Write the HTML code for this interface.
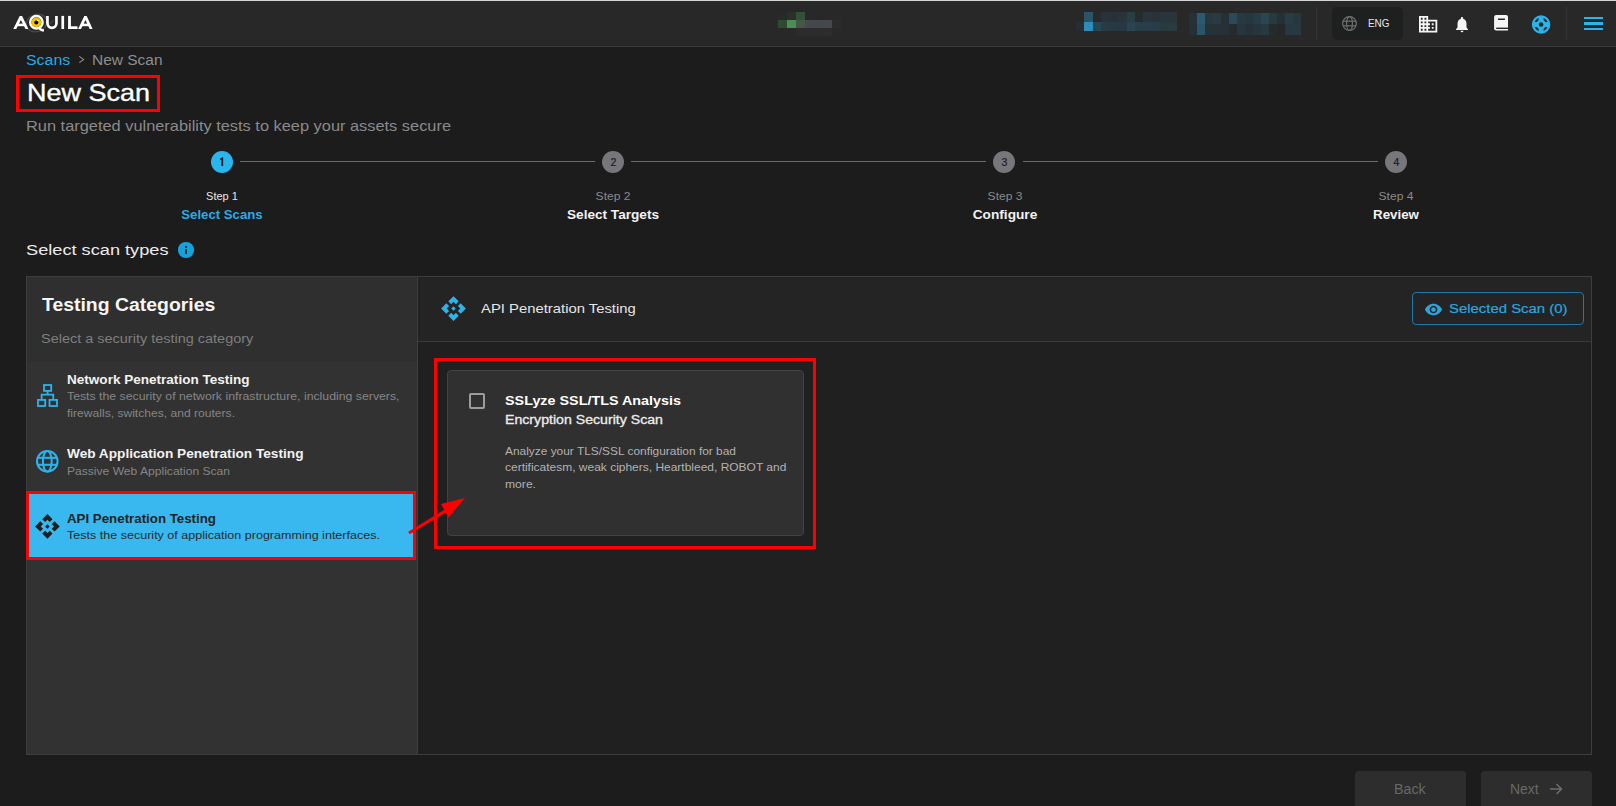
<!DOCTYPE html>
<html><head><meta charset="utf-8"><style>

html,body{margin:0;padding:0;}
body{width:1616px;height:806px;position:relative;overflow:hidden;background:#1c1c1c;font-family:"Liberation Sans",sans-serif;}
.a{position:absolute;box-sizing:border-box;}
.t{position:absolute;white-space:nowrap;line-height:1;display:block;}
svg{position:absolute;overflow:visible;}

</style></head><body>

<div class="a" style="left:0;top:0;width:1616px;height:1px;background:#d6d6d6"></div>
<div class="a" style="left:0;top:1px;width:1616px;height:45px;background:#282828"></div>
<div class="a" style="left:0;top:45px;width:1616px;height:1px;background:#252525"></div>
<div class="a" style="left:0;top:46px;width:1616px;height:1px;background:#3c3c3c"></div>

<svg style="left:0;top:0" width="110" height="46" viewBox="0 0 110 46">
 <ellipse cx="36.5" cy="23" rx="10.5" ry="8.6" fill="none" stroke="#4a4a4a" stroke-width="1.4" transform="rotate(-18 36.5 23)"/>
 <path d="M47 25.5 L54 20.5" stroke="#3c3c3c" stroke-width="1.6"/>
 <g fill="#fff">
  <polygon points="13.3,29 19.7,15.9 22.1,15.9 28.4,29 25.5,29 20.9,20.1 16.2,29"/>
  <rect x="16.6" y="23.6" width="8.6" height="2.6"/>
  <path d="M46.1 15.9 H48.8 V23.3 A3.15 3.15 0 0 0 55.1 23.3 V15.9 H57.8 V23.3 A5.85 5.85 0 0 1 46.1 23.3 Z"/>
  <rect x="61.4" y="15.9" width="2.7" height="13.1"/>
  <rect x="68.1" y="15.9" width="2.8" height="13.1"/>
  <rect x="68.1" y="26.3" width="9.4" height="2.7"/>
  <polygon points="78.1,29 84.3,15.9 86.7,15.9 92.6,29 89.7,29 85.5,20.1 81,29"/>
  <rect x="81.6" y="23.6" width="8.2" height="2.6"/>
 </g>
 <circle cx="36.4" cy="22.2" r="7.4" fill="#282828"/>
 <circle cx="36.4" cy="22.2" r="6.2" fill="none" stroke="#fff" stroke-width="2.5"/>
 <path d="M39.2 27.6 Q41 30.6 44 30.4" fill="none" stroke="#fff" stroke-width="2.3"/>
 <circle cx="36.3" cy="22.4" r="4.9" fill="#f5c400"/>
 <circle cx="36.3" cy="22.4" r="2" fill="#000"/>
 <circle cx="37.7" cy="20.5" r="0.8" fill="#fff"/>
</svg>

<div class="a" style="left:778px;top:12px;width:9px;height:8px;background:#272b27"></div>
<div class="a" style="left:787px;top:12px;width:9px;height:8px;background:#2b302b"></div>
<div class="a" style="left:796px;top:12px;width:9px;height:8px;background:#355038"></div>
<div class="a" style="left:778px;top:20px;width:9px;height:8px;background:#2f4a32"></div>
<div class="a" style="left:787px;top:20px;width:9px;height:8px;background:#4d8c54"></div>
<div class="a" style="left:796px;top:20px;width:9px;height:8px;background:#435846"></div>
<div class="a" style="left:805px;top:20px;width:9px;height:8px;background:#46484c"></div>
<div class="a" style="left:814px;top:20px;width:9px;height:8px;background:#45484b"></div>
<div class="a" style="left:823px;top:20px;width:9px;height:8px;background:#47484c"></div>
<div class="a" style="left:832px;top:20px;width:9px;height:8px;background:#2a2c2a"></div>
<div class="a" style="left:796px;top:28px;width:9px;height:8px;background:#2c2c2c"></div>
<div class="a" style="left:805px;top:28px;width:9px;height:8px;background:#2c2c2c"></div>
<div class="a" style="left:814px;top:28px;width:9px;height:8px;background:#2c2c2c"></div>
<div class="a" style="left:823px;top:28px;width:9px;height:8px;background:#2c2d2e"></div>
<div class="a" style="left:1076px;top:22px;width:8px;height:9px;background:#262e33"></div>
<div class="a" style="left:1084px;top:12px;width:9px;height:10px;background:#2a5468"></div>
<div class="a" style="left:1084px;top:22px;width:9px;height:9px;background:#2c8dbb"></div>
<div class="a" style="left:1093px;top:12px;width:8px;height:10px;background:#262a2d"></div>
<div class="a" style="left:1093px;top:22px;width:8px;height:9px;background:#284651"></div>
<div class="a" style="left:1101px;top:12px;width:9px;height:10px;background:#27323a"></div>
<div class="a" style="left:1101px;top:22px;width:9px;height:9px;background:#283a44"></div>
<div class="a" style="left:1110px;top:12px;width:8px;height:10px;background:#283139"></div>
<div class="a" style="left:1110px;top:22px;width:8px;height:9px;background:#283944"></div>
<div class="a" style="left:1118px;top:12px;width:9px;height:10px;background:#28343a"></div>
<div class="a" style="left:1118px;top:22px;width:9px;height:9px;background:#283842"></div>
<div class="a" style="left:1127px;top:12px;width:8px;height:10px;background:#293d45"></div>
<div class="a" style="left:1127px;top:22px;width:8px;height:9px;background:#294350"></div>
<div class="a" style="left:1135px;top:12px;width:8px;height:10px;background:#252c2e"></div>
<div class="a" style="left:1135px;top:22px;width:8px;height:9px;background:#283f48"></div>
<div class="a" style="left:1143px;top:12px;width:9px;height:10px;background:#28353c"></div>
<div class="a" style="left:1143px;top:22px;width:9px;height:9px;background:#293e4a"></div>
<div class="a" style="left:1152px;top:12px;width:8px;height:10px;background:#27323a"></div>
<div class="a" style="left:1152px;top:22px;width:8px;height:9px;background:#283d49"></div>
<div class="a" style="left:1160px;top:12px;width:9px;height:10px;background:#28363c"></div>
<div class="a" style="left:1160px;top:22px;width:9px;height:9px;background:#283a40"></div>
<div class="a" style="left:1169px;top:12px;width:8px;height:10px;background:#293539"></div>
<div class="a" style="left:1169px;top:22px;width:8px;height:9px;background:#293a40"></div>
<div class="a" style="left:1189px;top:13px;width:8px;height:11px;background:#263037"></div>
<div class="a" style="left:1189px;top:24px;width:8px;height:11px;background:#262f33"></div>
<div class="a" style="left:1197px;top:13px;width:8px;height:11px;background:#2b5a70"></div>
<div class="a" style="left:1197px;top:24px;width:8px;height:11px;background:#2a5468"></div>
<div class="a" style="left:1205px;top:13px;width:8px;height:11px;background:#273840"></div>
<div class="a" style="left:1205px;top:24px;width:8px;height:11px;background:#27313a"></div>
<div class="a" style="left:1213px;top:13px;width:8px;height:11px;background:#283a42"></div>
<div class="a" style="left:1213px;top:24px;width:8px;height:11px;background:#27313a"></div>
<div class="a" style="left:1221px;top:13px;width:8px;height:11px;background:#263137"></div>
<div class="a" style="left:1221px;top:24px;width:8px;height:11px;background:#263036"></div>
<div class="a" style="left:1229px;top:13px;width:8px;height:11px;background:#2a4a5a"></div>
<div class="a" style="left:1229px;top:24px;width:8px;height:11px;background:#262c2e"></div>
<div class="a" style="left:1237px;top:13px;width:8px;height:11px;background:#273a42"></div>
<div class="a" style="left:1237px;top:24px;width:8px;height:11px;background:#27363d"></div>
<div class="a" style="left:1245px;top:13px;width:8px;height:11px;background:#27373f"></div>
<div class="a" style="left:1245px;top:24px;width:8px;height:11px;background:#273139"></div>
<div class="a" style="left:1253px;top:13px;width:8px;height:11px;background:#283c45"></div>
<div class="a" style="left:1253px;top:24px;width:8px;height:11px;background:#27363e"></div>
<div class="a" style="left:1261px;top:13px;width:8px;height:11px;background:#2a4650"></div>
<div class="a" style="left:1261px;top:24px;width:8px;height:11px;background:#283a40"></div>
<div class="a" style="left:1269px;top:13px;width:8px;height:11px;background:#273a40"></div>
<div class="a" style="left:1269px;top:24px;width:8px;height:11px;background:#262a2b"></div>
<div class="a" style="left:1277px;top:13px;width:8px;height:11px;background:#273038"></div>
<div class="a" style="left:1277px;top:24px;width:8px;height:11px;background:#252829"></div>
<div class="a" style="left:1285px;top:13px;width:8px;height:11px;background:#283c46"></div>
<div class="a" style="left:1285px;top:24px;width:8px;height:11px;background:#283840"></div>
<div class="a" style="left:1293px;top:13px;width:8px;height:11px;background:#28373e"></div>
<div class="a" style="left:1293px;top:24px;width:8px;height:11px;background:#273a40"></div>

<div class="a" style="left:1316px;top:7px;width:1px;height:33px;background:#353535"></div>
<div class="a" style="left:1332px;top:7px;width:71px;height:33px;background:#1e1f1f;border-radius:5px"></div>
<svg style="left:1342px;top:15.6px" width="15" height="15" viewBox="0 0 22 22"><g fill="none" stroke="#6e6e6e" stroke-width="1.8">
<circle cx="11" cy="11" r="10.1"/><ellipse cx="11" cy="11" rx="4.3" ry="10.1"/><line x1="1.5" y1="7.6" x2="20.5" y2="7.6"/><line x1="1.5" y1="14.4" x2="20.5" y2="14.4"/></g></svg>

<svg style="left:1418.9px;top:15.6px" width="18.3" height="16.5" viewBox="2 3 20 18" preserveAspectRatio="none"><path fill="#f5f5f5" d="M12 7V3H2v18h20V7H12zM6 19H4v-2h2v2zm0-4H4v-2h2v2zm0-4H4V9h2v2zm0-4H4V5h2v2zm4 12H8v-2h2v2zm0-4H8v-2h2v2zm0-4H8V9h2v2zm0-4H8V5h2v2zm10 12h-8v-2h2v-2h-2v-2h2v-2h-2V9h8v10zm-2-8h-2v2h2v-2zm0 4h-2v2h2v-2z"/></svg>

<svg style="left:1456px;top:17.4px" width="12" height="15.3" viewBox="4 2.5 16 19.5" preserveAspectRatio="none"><path fill="#f5f5f5" d="M12 22c1.1 0 2-.9 2-2h-4c0 1.1.89 2 2 2zm6-6v-5c0-3.07-1.64-5.64-4.5-6.32V4c0-.83-.67-1.5-1.5-1.5s-1.5.67-1.5 1.5v.68C7.63 5.36 6 7.92 6 11v5l-2 2v1h16v-1l-2-2z"/></svg>

<svg style="left:0;top:0" width="1616" height="46" viewBox="0 0 1616 46">
 <path d="M1496.1 15.1 H1506 Q1508 15.1 1508 17.1 V30.6 H1496.1 Q1494.1 30.6 1494.1 28.6 V17.1 Q1494.1 15.1 1496.1 15.1 Z" fill="#f5f5f5"/>
 <rect x="1498" y="18.5" width="6.9" height="1.5" fill="#282828"/>
 <rect x="1496.2" y="27.6" width="11.8" height="1.4" fill="#282828"/>
</svg>

<svg style="left:0;top:0" width="1616" height="46" viewBox="0 0 1616 46">
 <circle cx="1541.1" cy="24.5" r="9.2" fill="#2ab4ee"/>
 <circle cx="1541.1" cy="24.5" r="5.9" fill="none" stroke="#282828" stroke-width="2.1"/>
 <circle cx="1541.1" cy="24.5" r="2.3" fill="#282828"/>
 <rect x="1538.6" y="16" width="5" height="5.8" fill="#2ab4ee"/>
 <rect x="1538.6" y="27.2" width="5" height="5.8" fill="#2ab4ee"/>
 <rect x="1532.6" y="22" width="5.8" height="5" fill="#2ab4ee"/>
 <rect x="1543.8" y="22" width="5.8" height="5" fill="#2ab4ee"/>
</svg>
<div class="a" style="left:1566px;top:7px;width:1px;height:33px;background:#353535"></div>
<div class="a" style="left:1584px;top:17px;width:19px;height:2.4px;background:#2ab4ee"></div>
<div class="a" style="left:1584px;top:22.3px;width:19px;height:2.4px;background:#2ab4ee"></div>
<div class="a" style="left:1584px;top:27.6px;width:19px;height:2.4px;background:#2ab4ee"></div>

<svg style="left:0;top:0" width="100" height="70" viewBox="0 0 100 70"><path d="M79.3 56.3 L83.7 59.5 L79.3 62.7" fill="none" stroke="#8f8f8f" stroke-width="1.05"/></svg>

<div class="a" style="left:16px;top:75px;width:144px;height:37px;border:3px solid #ff0000"></div>

<div class="a" style="left:240px;top:161px;width:355px;height:1px;background:#6c6c6c"></div>
<div class="a" style="left:631px;top:161px;width:355px;height:1px;background:#6c6c6c"></div>
<div class="a" style="left:1023px;top:161px;width:355px;height:1px;background:#6c6c6c"></div>
<div class="a" style="left:211px;top:151px;width:22px;height:22px;border-radius:50%;background:#2bb5ef"></div>
<svg style="left:0;top:0" width="300" height="200" viewBox="0 0 300 200"><path d="M220.3 159.4 L222.3 158.4 V165.9" fill="none" stroke="#1a1a1a" stroke-width="1.7" stroke-linejoin="miter"/></svg>
<div class="a" style="left:602px;top:151px;width:22px;height:22px;border-radius:50%;background:#77767a"></div>
<div class="a" style="left:993px;top:151px;width:22px;height:22px;border-radius:50%;background:#77767a"></div>
<div class="a" style="left:1385px;top:151px;width:22px;height:22px;border-radius:50%;background:#77767a"></div>

<div class="a" style="left:178.4px;top:242.4px;width:15.2px;height:15.2px;border-radius:50%;background:#16a0dc"></div>
<div class="a" style="left:184.9px;top:246px;width:2.2px;height:1.9px;background:#16303e"></div>
<div class="a" style="left:184.9px;top:249.2px;width:2.2px;height:4.8px;background:#16303e"></div>

<div class="a" style="left:26px;top:276px;width:1566px;height:479px;border:1px solid #3d3d3d;background:#202020"></div>
<div class="a" style="left:27px;top:277px;width:390px;height:477px;background:#2f2f2f"></div>
<div class="a" style="left:27px;top:362px;width:390px;height:392px;background:#323232"></div>
<div class="a" style="left:417px;top:277px;width:1px;height:477px;background:#3d3d3d"></div>
<div class="a" style="left:418px;top:277px;width:1173px;height:64px;background:#242424"></div>
<div class="a" style="left:418px;top:341px;width:1173px;height:1px;background:#3a3a3a"></div>

<svg style="left:0;top:0" width="100" height="420" viewBox="0 0 100 420"><g fill="none" stroke="#2ab4ee" stroke-width="1.8">
 <rect x="44" y="385" width="7.2" height="5.9"/><rect x="38" y="399.9" width="7.2" height="6.1"/><rect x="49.5" y="399.9" width="7.5" height="6.1"/>
 <path d="M47.6 390.9 V394.6 M41.6 399.9 V394.6 H53.25 V399.9"/></g></svg>

<svg style="left:36.2px;top:449.7px" width="22.6" height="22.6" viewBox="0 0 22 22"><g fill="none" stroke="#2ab4ee" stroke-width="2">
<circle cx="11" cy="11" r="10.0"/><ellipse cx="11" cy="11" rx="4.3" ry="10.0"/><line x1="1.5" y1="7.6" x2="20.5" y2="7.6"/><line x1="1.5" y1="14.4" x2="20.5" y2="14.4"/></g></svg>

<div class="a" style="left:27px;top:491px;width:389px;height:68px;background:#38b8ee"></div>
<div class="a" style="left:26px;top:491px;width:390px;height:69px;border:3px solid #ff0000"></div>
<svg style="left:34px;top:513px" width="26.8" height="26.8" viewBox="0 0 24 24"><path fill="#1e1e1e" d="M14 12l-2 2-2-2 2-2 2 2zm-2-6l2.12 2.12 2.5-2.5L12 1 7.38 5.62l2.5 2.5L12 6zm-6 6l2.12-2.12-2.5-2.5L1 12l4.62 4.62 2.5-2.5L6 12zm12 0l-2.12 2.12 2.5 2.5L23 12l-4.62-4.62-2.5 2.5L18 12zm-6 6l-2.12-2.12-2.5 2.5L12 23l4.62-4.62-2.5-2.5L12 18z"/></svg>

<svg style="left:440px;top:294.5px" width="27" height="27" viewBox="0 0 24 24"><path fill="#2ab4ee" d="M14 12l-2 2-2-2 2-2 2 2zm-2-6l2.12 2.12 2.5-2.5L12 1 7.38 5.62l2.5 2.5L12 6zm-6 6l2.12-2.12-2.5-2.5L1 12l4.62 4.62 2.5-2.5L6 12zm12 0l-2.12 2.12 2.5 2.5L23 12l-4.62-4.62-2.5 2.5L18 12zm-6 6l-2.12-2.12-2.5 2.5L12 23l4.62-4.62-2.5-2.5L12 18z"/></svg>

<div class="a" style="left:1412px;top:292px;width:172px;height:33px;border:1px solid #1d78a8;border-radius:4px"></div>
<svg style="left:1424.5px;top:301px" width="17" height="17" viewBox="1 1 22 22"><path fill="#2aa6df" d="M12 4.5C7 4.5 2.73 7.61 1 12c1.73 4.39 6 7.5 11 7.5s9.27-3.11 11-7.5c-1.73-4.39-6-7.5-11-7.5zM12 17c-2.76 0-5-2.24-5-5s2.24-5 5-5 5 2.24 5 5-2.24 5-5 5zm0-8c-1.66 0-3 1.34-3 3s1.34 3 3 3 3-1.34 3-3-1.34-3-3-3z"/></svg>

<div class="a" style="left:434px;top:358px;width:382px;height:191px;border:3px solid #ff0000"></div>
<div class="a" style="left:447px;top:370px;width:357px;height:166px;background:#303030;border:1px solid #424242;border-radius:4px"></div>
<div class="a" style="left:469px;top:393px;width:16px;height:16px;border:2px solid #9c9c9c;border-radius:2px"></div>

<svg style="left:0;top:0" width="1616" height="806" viewBox="0 0 1616 806">
 <line x1="409" y1="533" x2="452" y2="507" stroke="#ff0000" stroke-width="3.2"/>
 <polygon points="465,498 441,504 448.5,517.5" fill="#ff0000"/>
</svg>

<div class="a" style="left:1355px;top:771px;width:111px;height:45px;background:#2d2d2d;border-radius:4px"></div>
<div class="a" style="left:1481px;top:771px;width:111px;height:45px;background:#2d2d2d;border-radius:4px"></div>
<svg style="left:1549px;top:783px" width="14" height="12" viewBox="0 0 14 12"><path d="M1 6 H12.5 M7.5 1 L12.5 6 L7.5 11" fill="none" stroke="#6c6c6c" stroke-width="1.6"/></svg>

<span class="t" id="eng" style="left:1367.50px;top:18.00px;font-size:11px;color:#e6e6e6;transform:scaleX(0.9017);transform-origin:0 50%;">ENG</span>
<span class="t" id="bc1" style="left:26.00px;top:53.00px;font-size:14px;color:#29a8e4;transform:scaleX(1.1356);transform-origin:0 50%;">Scans</span>
<span class="t" id="bc2" style="left:91.50px;top:53.00px;font-size:14px;color:#8e8e8e;transform:scaleX(1.1048);transform-origin:0 50%;">New Scan</span>
<span class="t" id="title" style="left:26.50px;top:81.00px;font-size:24px;color:#ffffff;-webkit-text-stroke:0.35px #ffffff;transform:scaleX(1.1244);transform-origin:0 50%;">New Scan</span>
<span class="t" id="sub" style="left:25.50px;top:118.00px;font-size:15px;color:#8a8a8a;transform:scaleX(1.0915);transform-origin:0 50%;">Run targeted vulnerability tests to keep your assets secure</span>
<span class="t" id="s2n" style="left:613.40px;top:157.00px;font-size:10.5px;color:#1c1c1c;-webkit-text-stroke:0.2px #1c1c1c;transform:translateX(-50%) scaleX(1.0000);transform-origin:50% 50%;">2</span>
<span class="t" id="s3n" style="left:1004.40px;top:157.00px;font-size:10.5px;color:#1c1c1c;-webkit-text-stroke:0.2px #1c1c1c;transform:translateX(-50%) scaleX(1.0000);transform-origin:50% 50%;">3</span>
<span class="t" id="s4n" style="left:1396.40px;top:157.00px;font-size:10.5px;color:#1c1c1c;-webkit-text-stroke:0.2px #1c1c1c;transform:translateX(-50%) scaleX(1.0000);transform-origin:50% 50%;">4</span>
<span class="t" id="s1a" style="left:221.60px;top:191.00px;font-size:11px;color:#e6e6e6;transform:translateX(-50%) scaleX(0.9996);transform-origin:50% 50%;">Step 1</span>
<span class="t" id="s2a" style="left:613.00px;top:191.00px;font-size:11px;color:#8a8a8a;transform:translateX(-50%) scaleX(1.0939);transform-origin:50% 50%;">Step 2</span>
<span class="t" id="s3a" style="left:1004.50px;top:191.00px;font-size:11px;color:#8a8a8a;transform:translateX(-50%) scaleX(1.0939);transform-origin:50% 50%;">Step 3</span>
<span class="t" id="s4a" style="left:1395.50px;top:191.00px;font-size:11px;color:#8a8a8a;transform:translateX(-50%) scaleX(1.1002);transform-origin:50% 50%;">Step 4</span>
<span class="t" id="s1b" style="left:221.70px;top:209.00px;font-size:12.5px;color:#29abe6;font-weight:bold;transform:translateX(-50%) scaleX(1.0552);transform-origin:50% 50%;">Select Scans</span>
<span class="t" id="s2b" style="left:613.30px;top:209.00px;font-size:12.5px;color:#f2f2f2;font-weight:bold;transform:translateX(-50%) scaleX(1.0884);transform-origin:50% 50%;">Select Targets</span>
<span class="t" id="s3b" style="left:1004.50px;top:209.00px;font-size:12.5px;color:#f2f2f2;font-weight:bold;transform:translateX(-50%) scaleX(1.0926);transform-origin:50% 50%;">Configure</span>
<span class="t" id="s4b" style="left:1395.50px;top:209.00px;font-size:12.5px;color:#f2f2f2;font-weight:bold;transform:translateX(-50%) scaleX(1.0674);transform-origin:50% 50%;">Review</span>
<span class="t" id="sst" style="left:25.50px;top:242.00px;font-size:15.5px;color:#ececec;transform:scaleX(1.1730);transform-origin:0 50%;">Select scan types</span>
<span class="t" id="tc" style="left:41.50px;top:297.00px;font-size:17.5px;color:#f5f5f5;font-weight:bold;transform:scaleX(1.1091);transform-origin:0 50%;">Testing Categories</span>
<span class="t" id="tcs" style="left:40.50px;top:333.00px;font-size:12.5px;color:#7e7e7e;transform:scaleX(1.1573);transform-origin:0 50%;">Select a security testing category</span>
<span class="t" id="n1" style="left:66.50px;top:374.00px;font-size:12.5px;color:#f2f2f2;font-weight:bold;transform:scaleX(1.0834);transform-origin:0 50%;">Network Penetration Testing</span>
<span class="t" id="n2" style="left:66.50px;top:391.00px;font-size:11px;color:#858585;transform:scaleX(1.1168);transform-origin:0 50%;">Tests the security of network infrastructure, including servers,</span>
<span class="t" id="n3" style="left:66.50px;top:408.00px;font-size:11px;color:#858585;transform:scaleX(1.0992);transform-origin:0 50%;">firewalls, switches, and routers.</span>
<span class="t" id="w1" style="left:66.50px;top:448.00px;font-size:12.5px;color:#f2f2f2;font-weight:bold;transform:scaleX(1.0926);transform-origin:0 50%;">Web Application Penetration Testing</span>
<span class="t" id="w2" style="left:66.50px;top:466.00px;font-size:11px;color:#858585;transform:scaleX(1.0985);transform-origin:0 50%;">Passive Web Application Scan</span>
<span class="t" id="a1" style="left:66.50px;top:513.00px;font-size:12.5px;color:#222222;font-weight:bold;transform:scaleX(1.0637);transform-origin:0 50%;">API Penetration Testing</span>
<span class="t" id="a2" style="left:66.50px;top:530.00px;font-size:11px;color:#2a2a2a;transform:scaleX(1.1401);transform-origin:0 50%;">Tests the security of application programming interfaces.</span>
<span class="t" id="rh" style="left:481.00px;top:302.00px;font-size:13.5px;color:#e6e6e6;transform:scaleX(1.0991);transform-origin:0 50%;">API Penetration Testing</span>
<span class="t" id="sel" style="left:1448.50px;top:303.00px;font-size:12px;color:#2aa6df;-webkit-text-stroke:0.2px #2aa6df;transform:scaleX(1.2423);transform-origin:0 50%;">Selected Scan (0)</span>
<span class="t" id="c1" style="left:504.50px;top:394.00px;font-size:13px;color:#ffffff;font-weight:bold;transform:scaleX(1.1040);transform-origin:0 50%;">SSLyze SSL/TLS Analysis</span>
<span class="t" id="c2" style="left:504.50px;top:414.00px;font-size:12.5px;color:#ececec;-webkit-text-stroke:0.3px #ececec;transform:scaleX(1.1313);transform-origin:0 50%;">Encryption Security Scan</span>
<span class="t" id="d1" style="left:504.50px;top:446.00px;font-size:11px;color:#b2b2b2;transform:scaleX(1.0824);transform-origin:0 50%;">Analyze your TLS/SSL configuration for bad</span>
<span class="t" id="d2" style="left:504.50px;top:462.00px;font-size:11px;color:#b2b2b2;transform:scaleX(1.0886);transform-origin:0 50%;">certificatesm, weak ciphers, Heartbleed, ROBOT and</span>
<span class="t" id="d3" style="left:504.50px;top:479.00px;font-size:11px;color:#b2b2b2;transform:scaleX(1.1022);transform-origin:0 50%;">more.</span>
<span class="t" id="bk" style="left:1394.00px;top:782.00px;font-size:14px;color:#686868;transform:scaleX(1.0153);transform-origin:0 50%;">Back</span>
<span class="t" id="nx" style="left:1510.00px;top:782.00px;font-size:14px;color:#686868;transform:scaleX(0.9966);transform-origin:0 50%;">Next</span>
</body></html>
